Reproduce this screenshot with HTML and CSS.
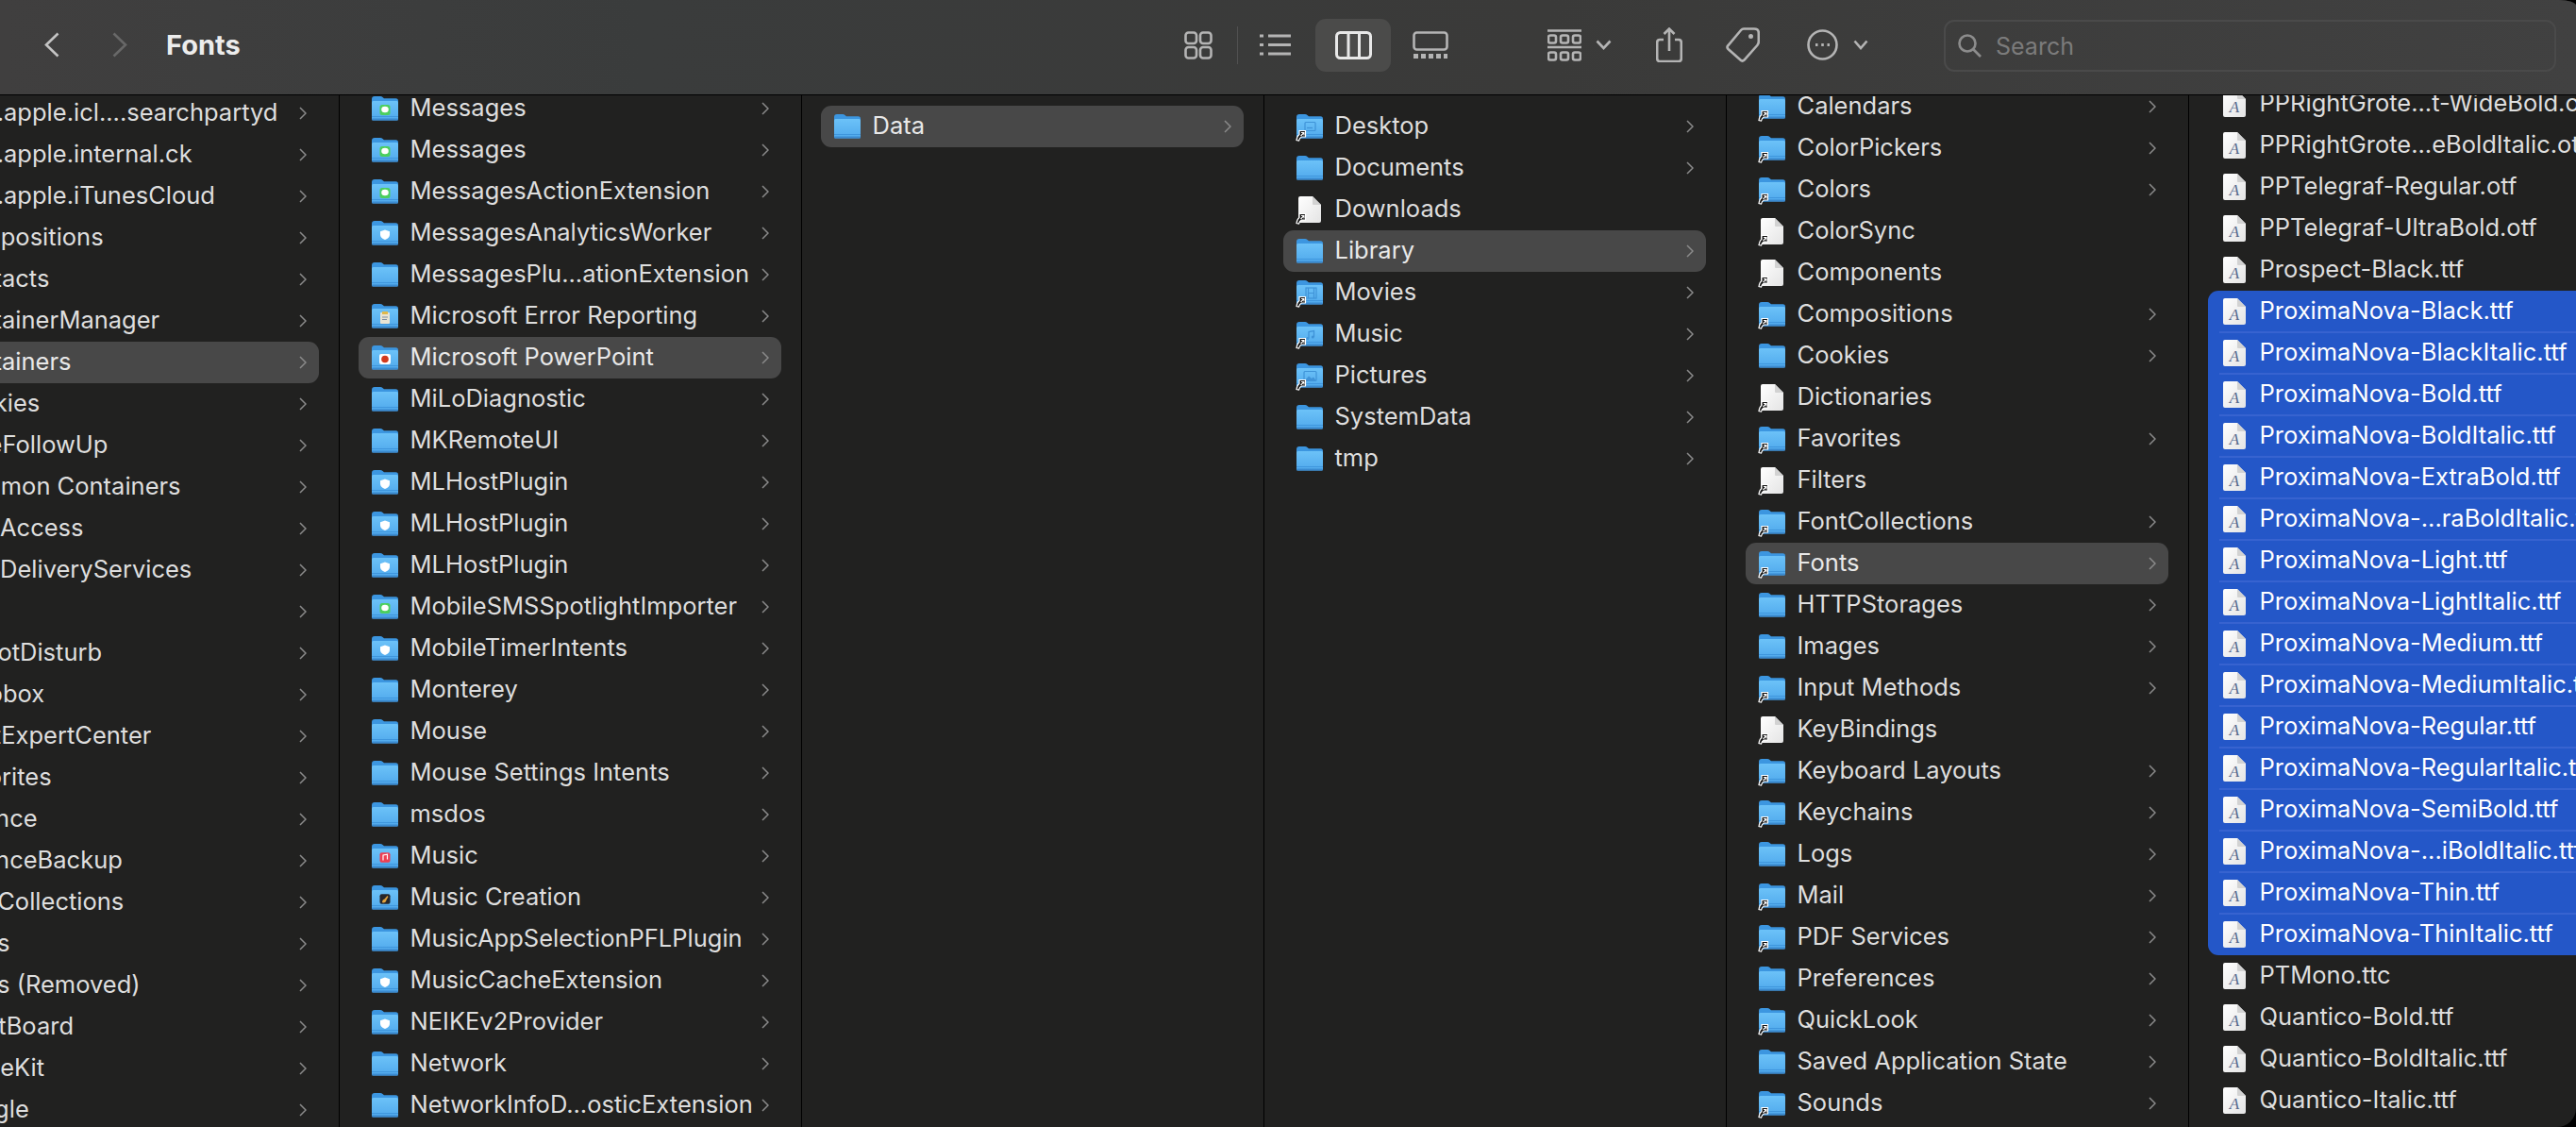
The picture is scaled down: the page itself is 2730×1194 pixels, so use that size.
FILE: index.html
```html
<!DOCTYPE html>
<html lang="en">
<head>
  <meta charset="UTF-8">
  <title>Fonts</title>
  <link rel="stylesheet" href="styles.css">
</head>
<body>
  <svg class="sprite">
    <defs>
      <linearGradient id="folderFront" x1="0" y1="0" x2="0" y2="1">
        <stop offset="0" stop-color="#6cc2f8"/>
        <stop offset="1" stop-color="#50a9ec"/>
      </linearGradient>
      <linearGradient id="paper" x1="0" y1="0" x2="1" y2="1">
        <stop offset="0" stop-color="#ffffff"/>
        <stop offset="1" stop-color="#e4e4e4"/>
      </linearGradient>
      <g id="folder">
        <path d="M0 4Q0 1 3 1H9Q10.5 1 11.5 2L13 3.3H25.5Q28 3.3 28 6V12H0Z" fill="#3c96e0"/>
        <rect y="6" width="28" height="20.5" rx="1.5" fill="url(#folderFront)"/>
        <rect y="22" width="28" height="1" fill="#3f96dd"/>
        <rect y="24.5" width="28" height="2" rx="1" fill="#3a8ad0"/>
      </g>
      <g id="file">
        <path d="M4 0H17L26 9V26Q26 28 24 28H4Q2 28 2 26V2Q2 0 4 0Z" fill="url(#paper)"/>
        <path d="M17 0L26 9H18Q17 9 17 8Z" fill="#d2d2d2"/>
      </g>
      <g id="fontfile">
        <use href="#file"/>
        <text x="14" y="23" text-anchor="middle" class="font-glyph">A</text>
      </g>
      <g id="alias">
        <path d="M0 28.5C0.5 25 1.5 23.5 3 22.5V18.5H9.5V25H5.5C4 25.5 3 27 2.5 29Z" fill="#111" stroke="#fff" stroke-width="1.2"/>
        <path d="M4.5 24L7.5 21M5 20.5H8V23.5" fill="none" stroke="#fff" stroke-width="1.1"/>
      </g>
      <g id="msg">
        <rect x="8.5" y="10" width="11" height="11" rx="2.5" fill="#4ccf5e"/>
        <ellipse cx="14" cy="15" rx="3.8" ry="3.3" fill="#fff"/>
      </g>
      <g id="shield">
        <path d="M14 10.5L19 12.2V15.5Q19 19 14 21Q9 19 9 15.5V12.2Z" fill="#fff"/>
      </g>
      <g id="clip">
        <rect x="9" y="10" width="10" height="12" rx="1" fill="#e9e4d4"/>
        <rect x="11" y="9" width="6" height="3" fill="#e0b84a"/>
        <path d="M11 15H17M11 17.5H16" stroke="#7f8fa0" stroke-width="1"/>
      </g>
      <g id="ppt">
        <rect x="8" y="10" width="12" height="11" rx="2" fill="#fff"/>
        <circle cx="14" cy="15.5" r="3.8" fill="#d23a1e"/>
      </g>
      <g id="redNote">
        <rect x="8.5" y="10.3" width="11" height="10.5" rx="2" fill="#ee3f52"/>
        <path d="M12 18.5V13L16.5 12.2V17.5" fill="none" stroke="#fff" stroke-width="1.2"/>
      </g>
      <g id="guitar">
        <rect x="8.5" y="10.3" width="11" height="10.5" rx="2" fill="#26262a"/>
        <path d="M11 19Q11 16 13.5 15.5L16.5 12L17.5 13L15.5 16.5Q15 19.5 12 19.5Z" fill="#e0a23c"/>
      </g>
      <g id="desk">
        <rect x="9" y="9.5" width="11" height="9" rx="1" fill="none" stroke="#3f93d8" stroke-width="1.2"/>
        <path d="M11 15.5H17" stroke="#3f93d8" stroke-width="1.2"/>
      </g>
      <g id="film">
        <rect x="10" y="9" width="11" height="11" fill="none" stroke="#3f93d8" stroke-width="1.2"/>
        <path d="M12.5 9V20M18.5 9V20M12.5 14.5H18.5" stroke="#3f93d8" stroke-width="1.2"/>
      </g>
      <g id="fadedNote">
        <path d="M13 18.5V11.5L18.5 10.5V17" fill="none" stroke="#3f93d8" stroke-width="1.3"/>
        <circle cx="11.8" cy="18.5" r="1.5" fill="#3f93d8"/>
        <circle cx="17.3" cy="17" r="1.5" fill="#3f93d8"/>
      </g>
      <g id="photo">
        <rect x="8" y="9.5" width="13" height="10" rx="1" fill="none" stroke="#3f93d8" stroke-width="1.2"/>
        <path d="M9 19L13 14.5L16 17L18 15.5L20.5 19Z" fill="#3f93d8"/>
      </g>
      <path id="chev" d="M1 1L7 7L1 13" fill="none" stroke="currentColor" stroke-width="1.5"/>
    </defs>
  </svg>

  <div class="window">
    <header class="toolbar">
      <svg class="nav-back" width="16" height="27"><path d="M14.5 1.5L2 13.5L14.5 25.5"/></svg>
      <svg class="nav-forward" width="16" height="27"><path d="M1.5 1.5L14 13.5L1.5 25.5"/></svg>
      <h1 class="title">Fonts</h1>

      <svg class="tool grid-view" width="30" height="30">
        <rect x="1.5" y="1.5" width="11.5" height="11.5" rx="3"/><rect x="17" y="1.5" width="11.5" height="11.5" rx="3"/>
        <rect x="1.5" y="17" width="11.5" height="11.5" rx="3"/><rect x="17" y="17" width="11.5" height="11.5" rx="3"/>
      </svg>
      <span class="divider"></span>
      <svg class="tool list-view" width="33" height="23">
        <path d="M0 2H4M9 2H33M0 11.5H4M9 11.5H33M0 21H4M9 21H33" stroke-width="3"/>
      </svg>
      <div class="view-on">
        <svg class="tool column-view" width="39" height="30">
          <rect x="1.5" y="1.5" width="36" height="27" rx="4"/><path d="M14 1.5V28.5M25.5 1.5V28.5"/>
        </svg>
      </div>
      <svg class="tool gallery-view" width="38" height="29">
        <rect x="1.5" y="1.5" width="35" height="18" rx="3"/>
        <path d="M1 26.5H6M9 26.5H14M17 26.5H22M25 26.5H30M33 26.5H37" stroke-width="5"/>
      </svg>
      <svg class="tool group-by" width="36" height="34">
        <path d="M0 1.5H36M0 19H36"/>
        <rect x="1" y="6.5" width="8" height="8" rx="2"/><rect x="14" y="6.5" width="8" height="8" rx="2"/><rect x="27" y="6.5" width="8" height="8" rx="2"/>
        <rect x="1" y="24.5" width="8" height="8" rx="2"/><rect x="14" y="24.5" width="8" height="8" rx="2"/><rect x="27" y="24.5" width="8" height="8" rx="2"/>
      </svg>
      <svg class="tool drop drop-group" width="17" height="11"><path d="M1.5 1.5L8.5 9L15.5 1.5"/></svg>
      <svg class="tool share" width="28" height="37">
        <path d="M8 13H4Q1.2 13 1.2 16V33Q1.2 36 4 36H24Q26.8 36 26.8 33V16Q26.8 13 24 13H20M14 1.5V25M8.5 7L14 1.5L19.5 7"/>
      </svg>
      <svg class="tool tag" width="36" height="37">
        <path d="M19 1.5H30Q34.8 1.5 34.8 6V15Q34.8 17 33.3 19L19.5 34.5Q17.5 36.5 15.5 34.5L2.5 23Q0.5 21 2.5 19L16 3Q17.3 1.5 19 1.5Z"/>
        <circle cx="26.5" cy="9.5" r="1.2"/>
      </svg>
      <svg class="tool more" width="33" height="33">
        <circle cx="16.5" cy="16.5" r="15"/>
        <path d="M9 16.5H11.5M15.2 16.5H17.8M21.5 16.5H24" stroke-width="3.2"/>
      </svg>
      <svg class="tool drop drop-more" width="16" height="11"><path d="M1.5 1.5L8 9L14.5 1.5"/></svg>
      <div class="search">
        <svg class="tool search-glass" width="25" height="25"><circle cx="10" cy="10" r="8.5"/><path d="M16 16L24 24"/></svg>
        <span class="search-text">Search</span>
      </div>
    </header>

    <main class="browser">
      <section class="col col-a">
        <div class="list">
          <div class="row"><svg class="ico"><use href="#folder"/></svg><span class="name">com.apple.icl....searchpartyd</span><svg class="more-chev"><use href="#chev"/></svg></div>
          <div class="row"><svg class="ico"><use href="#folder"/></svg><span class="name">com.apple.internal.ck</span><svg class="more-chev"><use href="#chev"/></svg></div>
          <div class="row"><svg class="ico"><use href="#folder"/></svg><span class="name">com.apple.iTunesCloud</span><svg class="more-chev"><use href="#chev"/></svg></div>
          <div class="row"><svg class="ico"><use href="#folder"/></svg><span class="name">Compositions</span><svg class="more-chev"><use href="#chev"/></svg></div>
          <div class="row"><svg class="ico"><use href="#folder"/></svg><span class="name">Contacts</span><svg class="more-chev"><use href="#chev"/></svg></div>
          <div class="row"><svg class="ico"><use href="#folder"/></svg><span class="name">ContainerManager</span><svg class="more-chev"><use href="#chev"/></svg></div>
          <div class="row on"><svg class="ico"><use href="#folder"/></svg><span class="name">Containers</span><svg class="more-chev"><use href="#chev"/></svg></div>
          <div class="row"><svg class="ico"><use href="#folder"/></svg><span class="name">Cookies</span><svg class="more-chev"><use href="#chev"/></svg></div>
          <div class="row"><svg class="ico"><use href="#folder"/></svg><span class="name">CoreFollowUp</span><svg class="more-chev"><use href="#chev"/></svg></div>
          <div class="row"><svg class="ico"><use href="#folder"/></svg><span class="name">Common Containers</span><svg class="more-chev"><use href="#chev"/></svg></div>
          <div class="row"><svg class="ico"><use href="#folder"/></svg><span class="name">DataAccess</span><svg class="more-chev"><use href="#chev"/></svg></div>
          <div class="row"><svg class="ico"><use href="#folder"/></svg><span class="name">DataDeliveryServices</span><svg class="more-chev"><use href="#chev"/></svg></div>
          <div class="row"><svg class="ico"><use href="#folder"/></svg><span class="name">Dia</span><svg class="more-chev"><use href="#chev"/></svg></div>
          <div class="row"><svg class="ico"><use href="#folder"/></svg><span class="name">DoNotDisturb</span><svg class="more-chev"><use href="#chev"/></svg></div>
          <div class="row"><svg class="ico"><use href="#folder"/></svg><span class="name">Dropbox</span><svg class="more-chev"><use href="#chev"/></svg></div>
          <div class="row"><svg class="ico"><use href="#folder"/></svg><span class="name">DuetExpertCenter</span><svg class="more-chev"><use href="#chev"/></svg></div>
          <div class="row"><svg class="ico"><use href="#folder"/></svg><span class="name">Favorites</span><svg class="more-chev"><use href="#chev"/></svg></div>
          <div class="row"><svg class="ico"><use href="#folder"/></svg><span class="name">Finance</span><svg class="more-chev"><use href="#chev"/></svg></div>
          <div class="row"><svg class="ico"><use href="#folder"/></svg><span class="name">FinanceBackup</span><svg class="more-chev"><use href="#chev"/></svg></div>
          <div class="row"><svg class="ico"><use href="#folder"/></svg><span class="name">FontCollections</span><svg class="more-chev"><use href="#chev"/></svg></div>
          <div class="row"><svg class="ico"><use href="#folder"/></svg><span class="name">Fonts</span><svg class="more-chev"><use href="#chev"/></svg></div>
          <div class="row"><svg class="ico"><use href="#folder"/></svg><span class="name">Fonts (Removed)</span><svg class="more-chev"><use href="#chev"/></svg></div>
          <div class="row"><svg class="ico"><use href="#folder"/></svg><span class="name">FrontBoard</span><svg class="more-chev"><use href="#chev"/></svg></div>
          <div class="row"><svg class="ico"><use href="#folder"/></svg><span class="name">GameKit</span><svg class="more-chev"><use href="#chev"/></svg></div>
          <div class="row"><svg class="ico"><use href="#folder"/></svg><span class="name">Google</span><svg class="more-chev"><use href="#chev"/></svg></div>
        </div>
      </section>

      <section class="col col-b">
        <div class="list">
          <div class="row"><svg class="ico"><use href="#folder"/><use href="#msg"/></svg><span class="name">Messages</span><svg class="more-chev"><use href="#chev"/></svg></div>
          <div class="row"><svg class="ico"><use href="#folder"/><use href="#msg"/></svg><span class="name">Messages</span><svg class="more-chev"><use href="#chev"/></svg></div>
          <div class="row"><svg class="ico"><use href="#folder"/><use href="#msg"/></svg><span class="name">MessagesActionExtension</span><svg class="more-chev"><use href="#chev"/></svg></div>
          <div class="row"><svg class="ico"><use href="#folder"/><use href="#shield"/></svg><span class="name">MessagesAnalyticsWorker</span><svg class="more-chev"><use href="#chev"/></svg></div>
          <div class="row"><svg class="ico"><use href="#folder"/></svg><span class="name">MessagesPlu...ationExtension</span><svg class="more-chev"><use href="#chev"/></svg></div>
          <div class="row"><svg class="ico"><use href="#folder"/><use href="#clip"/></svg><span class="name">Microsoft Error Reporting</span><svg class="more-chev"><use href="#chev"/></svg></div>
          <div class="row on"><svg class="ico"><use href="#folder"/><use href="#ppt"/></svg><span class="name">Microsoft PowerPoint</span><svg class="more-chev"><use href="#chev"/></svg></div>
          <div class="row"><svg class="ico"><use href="#folder"/></svg><span class="name">MiLoDiagnostic</span><svg class="more-chev"><use href="#chev"/></svg></div>
          <div class="row"><svg class="ico"><use href="#folder"/></svg><span class="name">MKRemoteUI</span><svg class="more-chev"><use href="#chev"/></svg></div>
          <div class="row"><svg class="ico"><use href="#folder"/><use href="#shield"/></svg><span class="name">MLHostPlugin</span><svg class="more-chev"><use href="#chev"/></svg></div>
          <div class="row"><svg class="ico"><use href="#folder"/><use href="#shield"/></svg><span class="name">MLHostPlugin</span><svg class="more-chev"><use href="#chev"/></svg></div>
          <div class="row"><svg class="ico"><use href="#folder"/><use href="#shield"/></svg><span class="name">MLHostPlugin</span><svg class="more-chev"><use href="#chev"/></svg></div>
          <div class="row"><svg class="ico"><use href="#folder"/><use href="#msg"/></svg><span class="name">MobileSMSSpotlightImporter</span><svg class="more-chev"><use href="#chev"/></svg></div>
          <div class="row"><svg class="ico"><use href="#folder"/><use href="#shield"/></svg><span class="name">MobileTimerIntents</span><svg class="more-chev"><use href="#chev"/></svg></div>
          <div class="row"><svg class="ico"><use href="#folder"/></svg><span class="name">Monterey</span><svg class="more-chev"><use href="#chev"/></svg></div>
          <div class="row"><svg class="ico"><use href="#folder"/></svg><span class="name">Mouse</span><svg class="more-chev"><use href="#chev"/></svg></div>
          <div class="row"><svg class="ico"><use href="#folder"/></svg><span class="name">Mouse Settings Intents</span><svg class="more-chev"><use href="#chev"/></svg></div>
          <div class="row"><svg class="ico"><use href="#folder"/></svg><span class="name">msdos</span><svg class="more-chev"><use href="#chev"/></svg></div>
          <div class="row"><svg class="ico"><use href="#folder"/><use href="#redNote"/></svg><span class="name">Music</span><svg class="more-chev"><use href="#chev"/></svg></div>
          <div class="row"><svg class="ico"><use href="#folder"/><use href="#guitar"/></svg><span class="name">Music Creation</span><svg class="more-chev"><use href="#chev"/></svg></div>
          <div class="row"><svg class="ico"><use href="#folder"/></svg><span class="name">MusicAppSelectionPFLPlugin</span><svg class="more-chev"><use href="#chev"/></svg></div>
          <div class="row"><svg class="ico"><use href="#folder"/><use href="#shield"/></svg><span class="name">MusicCacheExtension</span><svg class="more-chev"><use href="#chev"/></svg></div>
          <div class="row"><svg class="ico"><use href="#folder"/><use href="#shield"/></svg><span class="name">NEIKEv2Provider</span><svg class="more-chev"><use href="#chev"/></svg></div>
          <div class="row"><svg class="ico"><use href="#folder"/></svg><span class="name">Network</span><svg class="more-chev"><use href="#chev"/></svg></div>
          <div class="row"><svg class="ico"><use href="#folder"/></svg><span class="name">NetworkInfoD...osticExtension</span><svg class="more-chev"><use href="#chev"/></svg></div>
        </div>
      </section>

      <section class="col col-c">
        <div class="list">
          <div class="row on"><svg class="ico"><use href="#folder"/></svg><span class="name">Data</span><svg class="more-chev"><use href="#chev"/></svg></div>
        </div>
      </section>

      <section class="col col-d">
        <div class="list">
          <div class="row"><svg class="ico"><use href="#folder"/><use href="#desk"/><use href="#alias"/></svg><span class="name">Desktop</span><svg class="more-chev"><use href="#chev"/></svg></div>
          <div class="row"><svg class="ico"><use href="#folder"/></svg><span class="name">Documents</span><svg class="more-chev"><use href="#chev"/></svg></div>
          <div class="row"><svg class="ico"><use href="#file"/><use href="#alias"/></svg><span class="name">Downloads</span></div>
          <div class="row on"><svg class="ico"><use href="#folder"/></svg><span class="name">Library</span><svg class="more-chev"><use href="#chev"/></svg></div>
          <div class="row"><svg class="ico"><use href="#folder"/><use href="#film"/><use href="#alias"/></svg><span class="name">Movies</span><svg class="more-chev"><use href="#chev"/></svg></div>
          <div class="row"><svg class="ico"><use href="#folder"/><use href="#fadedNote"/><use href="#alias"/></svg><span class="name">Music</span><svg class="more-chev"><use href="#chev"/></svg></div>
          <div class="row"><svg class="ico"><use href="#folder"/><use href="#photo"/><use href="#alias"/></svg><span class="name">Pictures</span><svg class="more-chev"><use href="#chev"/></svg></div>
          <div class="row"><svg class="ico"><use href="#folder"/></svg><span class="name">SystemData</span><svg class="more-chev"><use href="#chev"/></svg></div>
          <div class="row"><svg class="ico"><use href="#folder"/></svg><span class="name">tmp</span><svg class="more-chev"><use href="#chev"/></svg></div>
        </div>
      </section>

      <section class="col col-e">
        <div class="list">
          <div class="row"><svg class="ico"><use href="#folder"/><use href="#alias"/></svg><span class="name">Calendars</span><svg class="more-chev"><use href="#chev"/></svg></div>
          <div class="row"><svg class="ico"><use href="#folder"/><use href="#alias"/></svg><span class="name">ColorPickers</span><svg class="more-chev"><use href="#chev"/></svg></div>
          <div class="row"><svg class="ico"><use href="#folder"/><use href="#alias"/></svg><span class="name">Colors</span><svg class="more-chev"><use href="#chev"/></svg></div>
          <div class="row"><svg class="ico"><use href="#file"/><use href="#alias"/></svg><span class="name">ColorSync</span></div>
          <div class="row"><svg class="ico"><use href="#file"/><use href="#alias"/></svg><span class="name">Components</span></div>
          <div class="row"><svg class="ico"><use href="#folder"/><use href="#alias"/></svg><span class="name">Compositions</span><svg class="more-chev"><use href="#chev"/></svg></div>
          <div class="row"><svg class="ico"><use href="#folder"/></svg><span class="name">Cookies</span><svg class="more-chev"><use href="#chev"/></svg></div>
          <div class="row"><svg class="ico"><use href="#file"/><use href="#alias"/></svg><span class="name">Dictionaries</span></div>
          <div class="row"><svg class="ico"><use href="#folder"/><use href="#alias"/></svg><span class="name">Favorites</span><svg class="more-chev"><use href="#chev"/></svg></div>
          <div class="row"><svg class="ico"><use href="#file"/><use href="#alias"/></svg><span class="name">Filters</span></div>
          <div class="row"><svg class="ico"><use href="#folder"/><use href="#alias"/></svg><span class="name">FontCollections</span><svg class="more-chev"><use href="#chev"/></svg></div>
          <div class="row on"><svg class="ico"><use href="#folder"/><use href="#alias"/></svg><span class="name">Fonts</span><svg class="more-chev"><use href="#chev"/></svg></div>
          <div class="row"><svg class="ico"><use href="#folder"/></svg><span class="name">HTTPStorages</span><svg class="more-chev"><use href="#chev"/></svg></div>
          <div class="row"><svg class="ico"><use href="#folder"/></svg><span class="name">Images</span><svg class="more-chev"><use href="#chev"/></svg></div>
          <div class="row"><svg class="ico"><use href="#folder"/><use href="#alias"/></svg><span class="name">Input Methods</span><svg class="more-chev"><use href="#chev"/></svg></div>
          <div class="row"><svg class="ico"><use href="#file"/><use href="#alias"/></svg><span class="name">KeyBindings</span></div>
          <div class="row"><svg class="ico"><use href="#folder"/><use href="#alias"/></svg><span class="name">Keyboard Layouts</span><svg class="more-chev"><use href="#chev"/></svg></div>
          <div class="row"><svg class="ico"><use href="#folder"/><use href="#alias"/></svg><span class="name">Keychains</span><svg class="more-chev"><use href="#chev"/></svg></div>
          <div class="row"><svg class="ico"><use href="#folder"/></svg><span class="name">Logs</span><svg class="more-chev"><use href="#chev"/></svg></div>
          <div class="row"><svg class="ico"><use href="#folder"/><use href="#alias"/></svg><span class="name">Mail</span><svg class="more-chev"><use href="#chev"/></svg></div>
          <div class="row"><svg class="ico"><use href="#folder"/><use href="#alias"/></svg><span class="name">PDF Services</span><svg class="more-chev"><use href="#chev"/></svg></div>
          <div class="row"><svg class="ico"><use href="#folder"/></svg><span class="name">Preferences</span><svg class="more-chev"><use href="#chev"/></svg></div>
          <div class="row"><svg class="ico"><use href="#folder"/><use href="#alias"/></svg><span class="name">QuickLook</span><svg class="more-chev"><use href="#chev"/></svg></div>
          <div class="row"><svg class="ico"><use href="#folder"/></svg><span class="name">Saved Application State</span><svg class="more-chev"><use href="#chev"/></svg></div>
          <div class="row"><svg class="ico"><use href="#folder"/><use href="#alias"/></svg><span class="name">Sounds</span><svg class="more-chev"><use href="#chev"/></svg></div>
        </div>
      </section>

      <section class="col col-f">
        <div class="list">
          <div class="row"><svg class="ico"><use href="#fontfile"/></svg><span class="name">PPRightGrote...t-WideBold.otf</span></div>
          <div class="row"><svg class="ico"><use href="#fontfile"/></svg><span class="name">PPRightGrote...eBoldItalic.otf</span></div>
          <div class="row"><svg class="ico"><use href="#fontfile"/></svg><span class="name">PPTelegraf-Regular.otf</span></div>
          <div class="row"><svg class="ico"><use href="#fontfile"/></svg><span class="name">PPTelegraf-UltraBold.otf</span></div>
          <div class="row"><svg class="ico"><use href="#fontfile"/></svg><span class="name">Prospect-Black.ttf</span></div>
          <div class="selection">
            <div class="row"><svg class="ico"><use href="#fontfile"/></svg><span class="name">ProximaNova-Black.ttf</span></div>
            <div class="row"><svg class="ico"><use href="#fontfile"/></svg><span class="name">ProximaNova-BlackItalic.ttf</span></div>
            <div class="row"><svg class="ico"><use href="#fontfile"/></svg><span class="name">ProximaNova-Bold.ttf</span></div>
            <div class="row"><svg class="ico"><use href="#fontfile"/></svg><span class="name">ProximaNova-BoldItalic.ttf</span></div>
            <div class="row"><svg class="ico"><use href="#fontfile"/></svg><span class="name">ProximaNova-ExtraBold.ttf</span></div>
            <div class="row"><svg class="ico"><use href="#fontfile"/></svg><span class="name">ProximaNova-...raBoldItalic.ttf</span></div>
            <div class="row"><svg class="ico"><use href="#fontfile"/></svg><span class="name">ProximaNova-Light.ttf</span></div>
            <div class="row"><svg class="ico"><use href="#fontfile"/></svg><span class="name">ProximaNova-LightItalic.ttf</span></div>
            <div class="row"><svg class="ico"><use href="#fontfile"/></svg><span class="name">ProximaNova-Medium.ttf</span></div>
            <div class="row"><svg class="ico"><use href="#fontfile"/></svg><span class="name">ProximaNova-MediumItalic.ttf</span></div>
            <div class="row"><svg class="ico"><use href="#fontfile"/></svg><span class="name">ProximaNova-Regular.ttf</span></div>
            <div class="row"><svg class="ico"><use href="#fontfile"/></svg><span class="name">ProximaNova-RegularItalic.ttf</span></div>
            <div class="row"><svg class="ico"><use href="#fontfile"/></svg><span class="name">ProximaNova-SemiBold.ttf</span></div>
            <div class="row"><svg class="ico"><use href="#fontfile"/></svg><span class="name">ProximaNova-...iBoldItalic.ttf</span></div>
            <div class="row"><svg class="ico"><use href="#fontfile"/></svg><span class="name">ProximaNova-Thin.ttf</span></div>
            <div class="row"><svg class="ico"><use href="#fontfile"/></svg><span class="name">ProximaNova-ThinItalic.ttf</span></div>
          </div>
          <div class="row"><svg class="ico"><use href="#fontfile"/></svg><span class="name">PTMono.ttc</span></div>
          <div class="row"><svg class="ico"><use href="#fontfile"/></svg><span class="name">Quantico-Bold.ttf</span></div>
          <div class="row"><svg class="ico"><use href="#fontfile"/></svg><span class="name">Quantico-BoldItalic.ttf</span></div>
          <div class="row"><svg class="ico"><use href="#fontfile"/></svg><span class="name">Quantico-Italic.ttf</span></div>
        </div>
      </section>
    </main>
  </div>
</body>
</html>
```

FILE: styles.css
```css
html, body {
  margin: 0;
  height: 100%;
  background-color: #000;
  overflow: hidden;
}
.sprite {
  display: block;
  width: 0;
  height: 0;
}
.font-glyph {
  font-family: "Liberation Serif", serif;
  font-style: italic;
  font-size: 17px;
  fill: #56698c;
}
.window {
  height: 1194px;
  display: flex;
  flex-direction: column;
  overflow: hidden;
  background-color: #212120;
  border-radius: 0 18px 20px 0 / 0 6px 20px 0;
  font-family: Inter, "Liberation Sans", sans-serif;
}

/* toolbar */
.toolbar {
  flex: none;
  height: 95px;
  padding-bottom: 5px;
  display: flex;
  align-items: center;
  background: linear-gradient(90deg, #403f3f 0%, #3a3c3c 25%, #3a3a39 60%, #414141 100%);
  border-bottom: 1px solid #000;
}
.toolbar svg {
  flex: none;
  fill: none;
}
.nav-back {
  margin-left: 47px;
  stroke: #c4c4c4;
  stroke-width: 2.6;
}
.nav-forward {
  margin-left: 56px;
  stroke: #686868;
  stroke-width: 2.6;
}
.title {
  margin: 0 0 0 41px;
  font-size: 29px;
  font-weight: 700;
  color: #ececec;
}
.tool {
  stroke: #b4b4b4;
  stroke-width: 2.6;
}
.grid-view {
  margin-left: auto;
}
.divider {
  flex: none;
  width: 1px;
  height: 40px;
  margin-left: 26px;
  background-color: #505050;
}
.list-view {
  margin-left: 23px;
}
.view-on {
  flex: none;
  width: 80px;
  height: 56px;
  margin-left: 26px;
  display: flex;
  align-items: center;
  justify-content: center;
  border-radius: 11px;
  background-color: #4b4b4a;
}
.column-view {
  stroke: #e8e8e8;
  stroke-width: 3;
}
.gallery-view {
  margin-left: 23px;
}
.group-by {
  margin-left: 105px;
}
.drop-group {
  margin-left: 15px;
}
.share {
  margin-left: 47px;
}
.tag {
  margin-left: 46px;
}
.more {
  margin-left: 50px;
}
.drop-more {
  margin-left: 16px;
}
.search {
  flex: none;
  box-sizing: border-box;
  width: 649px;
  height: 55px;
  margin: 2px 21px 0 80px;
  padding-left: 13px;
  display: flex;
  align-items: center;
  gap: 15px;
  border: 2px solid #4a4a4a;
  border-radius: 11px;
}
.search-glass {
  stroke: #8c8c8c;
}
.search-text {
  font-size: 25px;
  color: #7b7b7b;
}

/* columns */
.browser {
  flex: 1;
  min-height: 0;
  display: flex;
  margin-left: -130px;
}
.col {
  flex: none;
  box-sizing: border-box;
  width: 490px;
  overflow: hidden;
  border-right: 1px solid #000;
}
.col-a .list { margin-top: -3px; }
.col-b .list { margin-top: -8px; }
.col-c .list { margin-top: 11px; }
.col-d .list { margin-top: 11px; }
.col-e .list { margin-top: -10px; }
.col-f .list { margin-top: -13px; }

.row {
  height: 44px;
  margin: 0 21px 0 20px;
  padding-left: 14px;
  display: flex;
  align-items: center;
  border-radius: 11px;
  font-size: 25.5px;
  color: #dedede;
  white-space: nowrap;
}
.row.on {
  background-color: #484848;
  color: #e8e8e8;
}
.ico {
  flex: none;
  width: 28px;
  height: 28px;
  margin-right: 12.5px;
  overflow: visible;
}
.name {
  flex: 1;
  padding-bottom: 4px;
}
.more-chev {
  flex: none;
  width: 8px;
  height: 14px;
  margin-right: 13px;
  color: #8a8a8a;
}

/* multi selection in the last column, runs off the window edge */
.selection {
  margin-left: 20px;
  border-radius: 11px;
  background-color: #2457c8;
}
.selection .row {
  position: relative;
  margin: 0;
  color: #fff;
}
.selection .row + .row::before {
  content: "";
  position: absolute;
  top: -1px;
  left: 12px;
  right: 0;
  height: 2px;
  background-color: #3763d0;
}
```
